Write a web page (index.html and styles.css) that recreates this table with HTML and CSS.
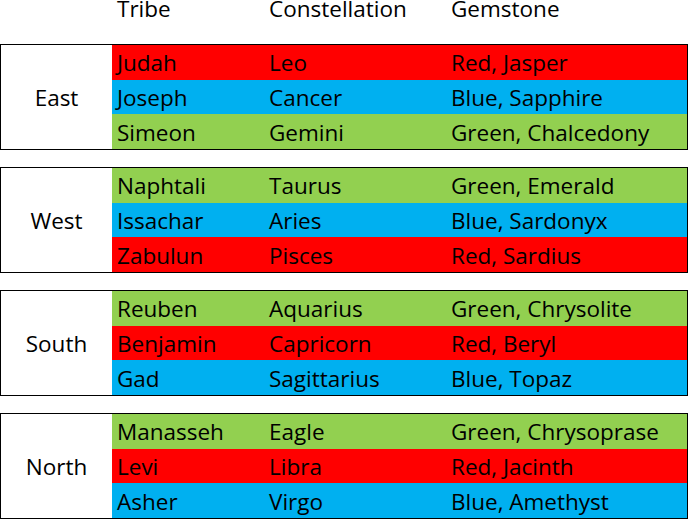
FILE: index.html
```html
<!DOCTYPE html>
<html>
<head>
<meta charset="utf-8">
<link rel="stylesheet" href="styles.css">
</head>
<body>
<div class="page">
  <div class="header">
    <div class="spacer"></div>
    <div class="cols">
      <div class="cell">Tribe</div>
      <div class="cell">Constellation</div>
      <div class="cell">Gemstone</div>
    </div>
  </div>

  <div class="group">
    <div class="label">East</div>
    <div class="rows">
      <div class="cols row red"><div class="cell">Judah</div><div class="cell">Leo</div><div class="cell">Red, Jasper</div></div>
      <div class="cols row blue"><div class="cell">Joseph</div><div class="cell">Cancer</div><div class="cell">Blue, Sapphire</div></div>
      <div class="cols row green"><div class="cell">Simeon</div><div class="cell">Gemini</div><div class="cell">Green, Chalcedony</div></div>
    </div>
  </div>

  <div class="group">
    <div class="label">West</div>
    <div class="rows">
      <div class="cols row green"><div class="cell">Naphtali</div><div class="cell">Taurus</div><div class="cell">Green, Emerald</div></div>
      <div class="cols row blue"><div class="cell">Issachar</div><div class="cell">Aries</div><div class="cell">Blue, Sardonyx</div></div>
      <div class="cols row red"><div class="cell">Zabulun</div><div class="cell">Pisces</div><div class="cell">Red, Sardius</div></div>
    </div>
  </div>

  <div class="group">
    <div class="label">South</div>
    <div class="rows">
      <div class="cols row green"><div class="cell">Reuben</div><div class="cell">Aquarius</div><div class="cell">Green, Chrysolite</div></div>
      <div class="cols row red"><div class="cell">Benjamin</div><div class="cell">Capricorn</div><div class="cell">Red, Beryl</div></div>
      <div class="cols row blue"><div class="cell">Gad</div><div class="cell">Sagittarius</div><div class="cell">Blue, Topaz</div></div>
    </div>
  </div>

  <div class="group">
    <div class="label">North</div>
    <div class="rows">
      <div class="cols row green"><div class="cell">Manasseh</div><div class="cell">Eagle</div><div class="cell">Green, Chrysoprase</div></div>
      <div class="cols row red"><div class="cell">Levi</div><div class="cell">Libra</div><div class="cell">Red, Jacinth</div></div>
      <div class="cols row blue"><div class="cell">Asher</div><div class="cell">Virgo</div><div class="cell">Blue, Amethyst</div></div>
    </div>
  </div>
</div>
</body>
</html>
```

FILE: styles.css
```css
html, body {
  margin: 0;
  padding: 0;
  background: #ffffff;
}
.page {
  width: 688px;
  font-family: "Open Sans", Lato, sans-serif;
  font-size: 22.5px;
  color: #000000;
  display: flex;
  flex-direction: column;
  gap: 17px;
}
.header {
  display: flex;
  height: 27px;
  line-height: 18px;
}
.spacer {
  width: 112px;
  flex: none;
}
.cols {
  flex: 1;
  display: grid;
  grid-template-columns: 152px 182px 1fr;
}
.cell {
  padding-left: 5px;
  white-space: nowrap;
}
.group {
  display: flex;
  height: 104px;
  border: 1px solid #000000;
}
.label {
  width: 111px;
  flex: none;
  display: flex;
  align-items: center;
  justify-content: center;
  background: #ffffff;
}
.rows {
  flex: 1;
  display: flex;
  flex-direction: column;
}
.row {
  flex: 1;
  align-items: center;
  padding-top: 1px;
}
.red { background: #ff0000; }
.blue { background: #00b0f0; }
.green { background: #92d050; }
```
